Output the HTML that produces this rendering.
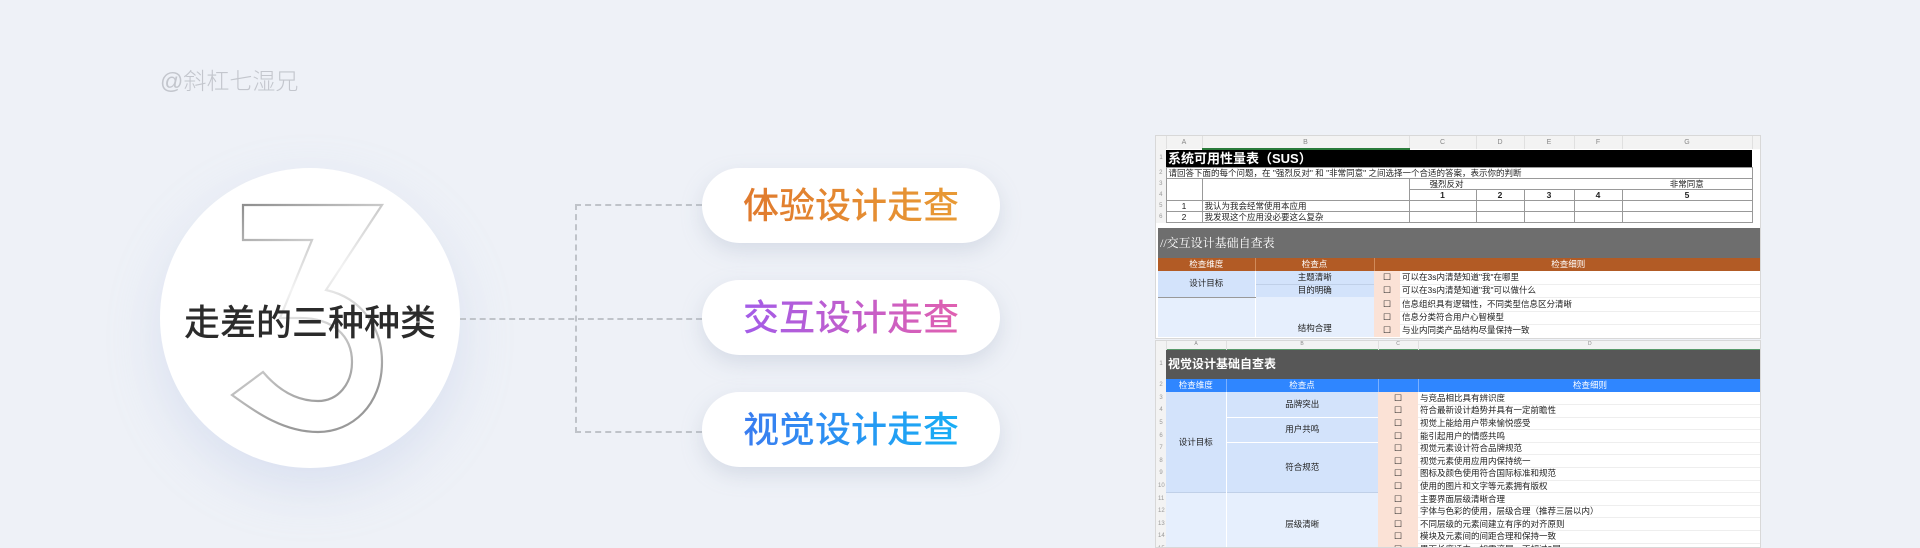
<!DOCTYPE html>
<html><head><meta charset="utf-8">
<style>
*{margin:0;padding:0;box-sizing:border-box}
body{width:1920px;height:548px;overflow:hidden;background:#eef1f7;font-family:"Liberation Sans","Noto Sans CJK SC",sans-serif;position:relative}
.abs{position:absolute}
.wm{left:160px;top:62px;font-size:23px;color:#c3c6cd;font-weight:300}
.circle{left:160px;top:168px;width:300px;height:300px;border-radius:50%;background:#fff;box-shadow:0 20px 50px rgba(180,195,230,.35)}
.ctext{left:160px;top:294px;width:300px;text-align:center;font-size:36px;color:#2b2b2b;font-weight:500}
.pill{left:702px;width:298px;height:75px;border-radius:38px;background:#fff;box-shadow:0 8px 20px rgba(170,180,200,.35);text-align:center;line-height:75px;font-size:36px;font-weight:500}
.pill span{-webkit-background-clip:text;background-clip:text;color:transparent}
.dl{border-color:#bfc3c9;border-style:dashed;border-width:0}
table{border-collapse:collapse;table-layout:fixed}
td{overflow:hidden;white-space:nowrap;font-size:8.5px;line-height:9px;color:#222;padding:0 2px}
.s1{left:1155px;top:135px;width:606px;height:204px;background:#fff;border:1px solid #d8d8d8;overflow:hidden}
.s2{left:1155px;top:340px;width:606px;height:208px;background:#fff;border:1px solid #d8d8d8;overflow:hidden}
.colh td{background:#f3f3f3;color:#888;font-size:7px;text-align:center;border-right:1px solid #e0e0e0}
.rn{background:#f3f3f3;color:#999;font-size:6px;text-align:center}
.cb{background:#fbe2d6;text-align:center;font-size:9px}
tr{overflow:hidden}
</style></head><body>
<div class="abs wm">@斜杠七湿兄</div>
<div class="abs circle"></div>
<svg class="abs" style="left:0;top:0" width="600" height="548">
<defs><linearGradient id="g3" x1="0" y1="0" x2="0.3" y2="1">
<stop offset="0" stop-color="#8a8a8a"/><stop offset="0.45" stop-color="#f2f2f2"/><stop offset="1" stop-color="#999"/></linearGradient></defs>
<path d="M243,205 L382,205 L326,290 C362,298 382,328 382,362 C382,405 352,432 318,432 C285,432 258,414 232,395 L263,372 C280,392 298,401 318,401 C338,401 352,384 352,362 C352,336 333,318 300,318 L280,318 L312,240 L243,240 Z" fill="none" stroke="url(#g3)" stroke-width="2.2"/>
</svg>
<div class="abs ctext">走差的三种种类</div>
<div class="abs dl" style="left:460px;top:318px;width:242px;border-top-width:2px"></div>
<div class="abs dl" style="left:575px;top:204px;width:127px;height:229px;border-top-width:2px;border-left-width:2px;border-bottom-width:2px"></div>
<div class="abs pill" style="top:168px"><span style="background-image:linear-gradient(90deg,#e07a2e,#e89a35)">体验设计走查</span></div>
<div class="abs pill" style="top:280px"><span style="background-image:linear-gradient(90deg,#a35ce8,#e060b0)">交互设计走查</span></div>
<div class="abs pill" style="top:392px"><span style="background-image:linear-gradient(90deg,#3a7cf0,#18aef5)">视觉设计走查</span></div>

<div class="abs s1">
<table style="width:606px">
<colgroup><col style="width:10px"><col style="width:36px"><col style="width:207px"><col style="width:67px"><col style="width:48px"><col style="width:50px"><col style="width:48px"><col style="width:130px"><col style="width:10px"></colgroup>
<tr class="colh" style="height:13px"><td></td><td>A</td><td style="border-bottom:2px solid #2a7a3a">B</td><td>C</td><td>D</td><td>E</td><td>F</td><td>G</td><td></td></tr>
<tr style="height:18px"><td class="rn">1</td><td colspan="7" style="background:#000;color:#fff;font-size:13px;line-height:17px;font-weight:bold">系统可用性量表（SUS）</td><td></td></tr>
<tr style="height:11px"><td class="rn">2</td><td colspan="7" style="border:1px solid #999">请回答下面的每个问题，在 "强烈反对" 和 "非常同意" 之间选择一个合适的答案，表示你的判断</td><td></td></tr>
<tr style="height:11px"><td class="rn">3</td><td style="border-left:1px solid #999"></td><td style="border-left:1px solid #999"></td><td colspan="4" style="border-left:1px solid #999;padding-left:20px">强烈反对</td><td style="text-align:center;border-right:1px solid #999">非常同意</td><td></td></tr>
<tr style="height:11px"><td class="rn">4</td><td style="border-left:1px solid #999"></td><td style="border-left:1px solid #999"></td><td style="border:1px solid #999;text-align:center;font-weight:bold">1</td><td style="border:1px solid #999;text-align:center;font-weight:bold">2</td><td style="border:1px solid #999;text-align:center;font-weight:bold">3</td><td style="border:1px solid #999;text-align:center;font-weight:bold">4</td><td style="border:1px solid #999;text-align:center;font-weight:bold">5</td><td></td></tr>
<tr style="height:11px"><td class="rn">5</td><td style="border:1px solid #999;text-align:center">1</td><td style="border:1px solid #999">我认为我会经常使用本应用</td><td style="border:1px solid #999"></td><td style="border:1px solid #999"></td><td style="border:1px solid #999"></td><td style="border:1px solid #999"></td><td style="border:1px solid #999"></td><td></td></tr>
<tr style="height:11px"><td class="rn">6</td><td style="border:1px solid #999;text-align:center">2</td><td style="border:1px solid #999">我发现这个应用没必要这么复杂</td><td style="border:1px solid #999"></td><td style="border:1px solid #999"></td><td style="border:1px solid #999"></td><td style="border:1px solid #999"></td><td style="border:1px solid #999"></td><td></td></tr>
</table>
<div class="abs" style="left:2px;top:92px;width:604px;height:112px;background:#fff">
<div style="height:30px;background:#6e6e6e;color:#fff;font-size:12px;line-height:30px;padding-left:2px;font-family:'Liberation Serif','Noto Serif CJK SC',serif">//交互设计基础自查表</div>
<table style="width:604px">
<colgroup><col style="width:97px"><col style="width:119px"><col style="width:26px"><col></colgroup>
<tr style="height:13px;background:#b25b25"><td style="color:#fff;text-align:center;border-right:1px solid #d08a5a">检查维度</td><td style="color:#fff;text-align:center;border-right:1px solid #d08a5a">检查点</td><td colspan="2" style="color:#fff;text-align:center">检查细则</td></tr>
<tr style="height:13px"><td rowspan="2" style="background:#d3e3fb;text-align:center;border-bottom:1px solid #999">设计目标</td><td style="background:#d3e3fb;text-align:center;border-left:1px solid #fff">主题清晰</td><td class="cb">☐</td><td style="border-bottom:1px solid #eee">可以在3s内清楚知道"我"在哪里</td></tr>
<tr style="height:13px"><td style="background:#d3e3fb;text-align:center;border-left:1px solid #fff;border-top:1px solid #c0d0e8">目的明确</td><td class="cb">☐</td><td style="border-bottom:1px solid #eee">可以在3s内清楚知道"我"可以做什么</td></tr>
<tr style="height:14px"><td rowspan="3" style="background:#e6effd"></td><td rowspan="3" style="background:#e6effd;text-align:center;border-left:1px solid #fff;vertical-align:bottom;padding-bottom:4px">结构合理</td><td class="cb">☐</td><td style="border-bottom:1px solid #eee">信息组织具有逻辑性，不同类型信息区分清晰</td></tr>
<tr style="height:13px"><td class="cb">☐</td><td style="border-bottom:1px solid #eee">信息分类符合用户心智模型</td></tr>
<tr style="height:13px"><td class="cb">☐</td><td>与业内同类产品结构尽量保持一致</td></tr>
</table></div>
</div>

<div class="abs s2">
<table style="width:606px">
<colgroup><col style="width:10px"><col style="width:60px"><col style="width:152px"><col style="width:40px"><col></colgroup>
<tr class="colh" style="height:8px"><td style="font-size:5px;line-height:7px"></td><td style="font-size:5px;line-height:7px">A</td><td style="font-size:5px;line-height:7px">B</td><td style="font-size:5px;line-height:7px">C</td><td style="font-size:5px;line-height:7px">D</td></tr>
<tr style="height:30px"><td class="rn">1</td><td colspan="4" style="background:#575757;color:#fff;font-size:12px;line-height:28px;font-weight:bold;border-top:1px solid #5a9a6a">视觉设计基础自查表</td></tr>
<tr style="height:13px;background:#2f86ff"><td class="rn">2</td><td style="color:#fff;text-align:center;border-right:1px solid #7ab0ff">检查维度</td><td style="color:#fff;text-align:center;border-right:1px solid #7ab0ff">检查点</td><td style="border-right:1px solid #7ab0ff"></td><td style="color:#fff;text-align:center">检查细则</td></tr>
<tr style="height:12.6px"><td class="rn">3</td><td rowspan="8" style="background:#d3e3fb;text-align:center">设计目标</td><td rowspan="2" style="background:#d3e3fb;text-align:center;border-left:1px solid #fff;border-bottom:1px solid #fff">品牌突出</td><td class="cb">☐</td><td style="border-bottom:1px solid #eee">与竞品相比具有辨识度</td></tr>
<tr style="height:12.6px"><td class="rn">4</td><td class="cb">☐</td><td style="border-bottom:1px solid #eee">符合最新设计趋势并具有一定前瞻性</td></tr>
<tr style="height:12.6px"><td class="rn">5</td><td rowspan="2" style="background:#d3e3fb;text-align:center;border-left:1px solid #fff;border-bottom:1px solid #fff">用户共鸣</td><td class="cb">☐</td><td style="border-bottom:1px solid #eee">视觉上能给用户带来愉悦感受</td></tr>
<tr style="height:12.6px"><td class="rn">6</td><td class="cb">☐</td><td style="border-bottom:1px solid #eee">能引起用户的情感共鸣</td></tr>
<tr style="height:12.6px"><td class="rn">7</td><td rowspan="4" style="background:#d3e3fb;text-align:center;border-left:1px solid #fff">符合规范</td><td class="cb">☐</td><td style="border-bottom:1px solid #eee">视觉元素设计符合品牌规范</td></tr>
<tr style="height:12.6px"><td class="rn">8</td><td class="cb">☐</td><td style="border-bottom:1px solid #eee">视觉元素使用应用内保持统一</td></tr>
<tr style="height:12.6px"><td class="rn">9</td><td class="cb">☐</td><td style="border-bottom:1px solid #eee">图标及颜色使用符合国际标准和规范</td></tr>
<tr style="height:12.6px"><td class="rn">10</td><td class="cb">☐</td><td style="border-bottom:1px solid #eee">使用的图片和文字等元素拥有版权</td></tr>
<tr style="height:12.6px"><td class="rn">11</td><td rowspan="5" style="background:#e6effd;border-top:1px solid #c0d0e8"></td><td rowspan="5" style="background:#e6effd;text-align:center;border-left:1px solid #fff;border-top:1px solid #c0d0e8">层级清晰</td><td class="cb">☐</td><td style="border-bottom:1px solid #eee">主要界面层级清晰合理</td></tr>
<tr style="height:12.6px"><td class="rn">12</td><td class="cb">☐</td><td style="border-bottom:1px solid #eee">字体与色彩的使用，层级合理（推荐三层以内）</td></tr>
<tr style="height:12.6px"><td class="rn">13</td><td class="cb">☐</td><td style="border-bottom:1px solid #eee">不同层级的元素间建立有序的对齐原则</td></tr>
<tr style="height:12.6px"><td class="rn">14</td><td class="cb">☐</td><td style="border-bottom:1px solid #eee">模块及元素间的间距合理和保持一致</td></tr>
<tr style="height:12.6px"><td class="rn">15</td><td class="cb">☐</td><td>界面长度适中，如需滚屏，不超过3屏</td></tr>
</table>
</div>
</body></html>
